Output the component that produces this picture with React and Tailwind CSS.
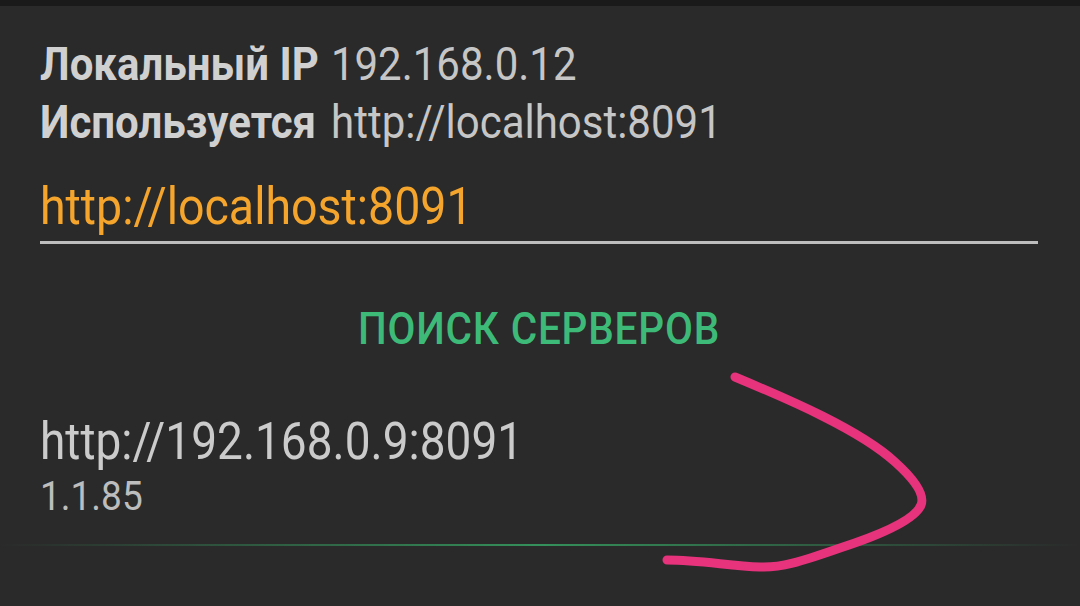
export default function App() {
  return (
    <div
      className="relative w-[1080px] h-[606px] overflow-hidden bg-[#2a2a2a] text-[#c6c6c6]"
      style={{ fontFamily: "Roboto, 'Noto Sans', sans-serif" }}
    >
      {/* status bar edge */}
      <div className="h-[6px] bg-[#1a1a1a]" />

      <div className="flex flex-col pt-[29px]">
        {/* info rows */}
        <div className="px-[40px] text-[42px] leading-[58px]">
          <div className="flex whitespace-nowrap scale-y-[1.12] origin-center">
            <span className="font-bold text-[#d0d0d0] mr-[12px]">Локальный IP</span>
            <span>192.168.0.12</span>
          </div>
          <div className="flex whitespace-nowrap scale-y-[1.12] origin-center">
            <span className="font-bold text-[#d0d0d0] mr-[15px]">Используется</span>
            <span>http://localhost:8091</span>
          </div>
        </div>

        {/* url input */}
        <div className="px-[40px] pr-[42px] mt-[29px]">
          <div className="text-[46.5px] leading-[52px] text-[#f5a52c] whitespace-nowrap scale-y-[1.1] origin-left">
            http://localhost:8091
          </div>
          <div className="mt-[9px] h-[3px] bg-[#bdbdbd]" />
        </div>

        {/* search button */}
        <div className="mt-[65px] flex justify-center h-[40px] items-center">
          <span className="block text-[40.5px] leading-[40px] font-medium text-[#3dba78] tracking-[0.02em] scale-y-[1.08] ml-[-2px]">
            ПОИСК СЕРВЕРОВ
          </span>
        </div>

        {/* server list item */}
        <div className="mt-[69px] px-[40px]">
          <div className="text-[46px] leading-[46px] text-[#cbcbcb] whitespace-nowrap scale-y-[1.12] origin-left">
            http://192.168.0.9:8091
          </div>
          <div className="mt-[13px] text-[37px] leading-[40px] text-[#bdbdbd] scale-y-[1.12] origin-left">1.1.85</div>
        </div>

        {/* progress divider */}
        <div className="mt-[27px] h-[2px] bg-gradient-to-r from-transparent via-[#34905a] to-transparent" />
      </div>

      {/* hand-drawn annotation */}
      <svg
        className="absolute inset-0 pointer-events-none"
        width="1080"
        height="606"
        viewBox="0 0 1080 606"
      >
        <path
          d="M735 377 C790 400 860 430 895 462 C915 480 925 495 921 505 C915 520 880 535 840 548 C800 562 780 568 760 567 C730 566 700 560 667 560"
          fill="none"
          stroke="#e6337c"
          strokeWidth="9"
          strokeLinecap="round"
          strokeLinejoin="round"
        />
      </svg>
    </div>
  );
}
